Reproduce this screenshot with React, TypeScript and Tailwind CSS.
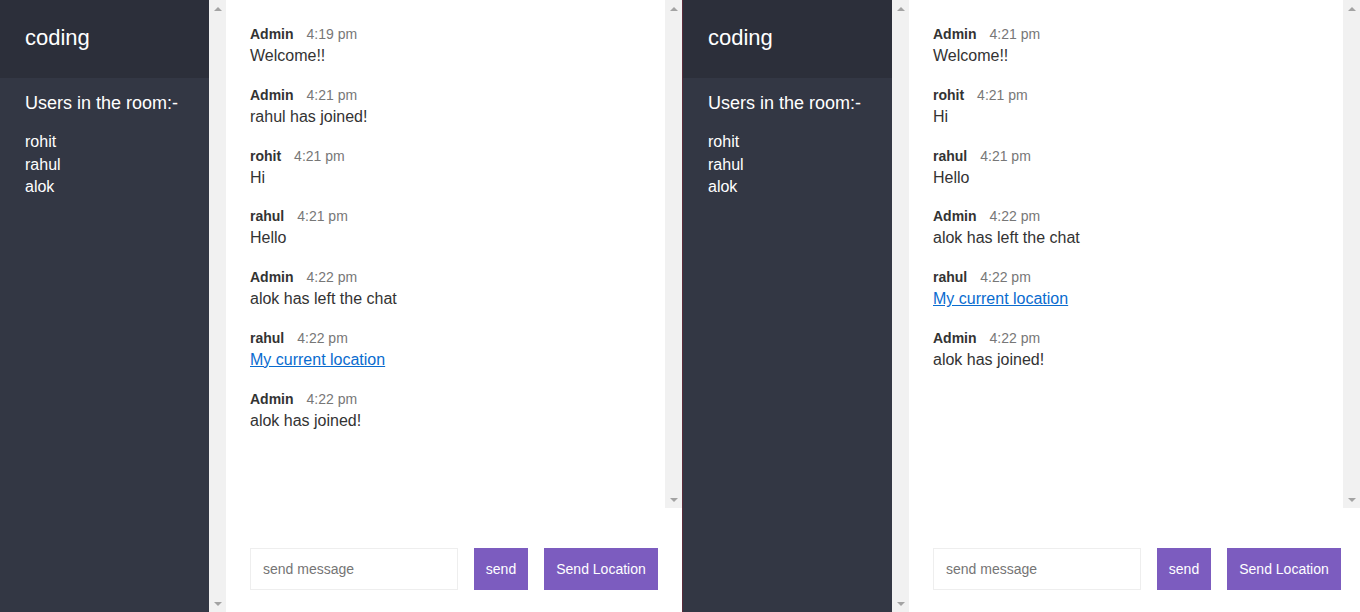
import React from "react";

type Message = {
  name: string;
  time: string;
  text: string;
  link?: boolean;
};

const leftMessages: Message[] = [
  { name: "Admin", time: "4:19 pm", text: "Welcome!!" },
  { name: "Admin", time: "4:21 pm", text: "rahul has joined!" },
  { name: "rohit", time: "4:21 pm", text: "Hi" },
  { name: "rahul", time: "4:21 pm", text: "Hello" },
  { name: "Admin", time: "4:22 pm", text: "alok has left the chat" },
  { name: "rahul", time: "4:22 pm", text: "My current location", link: true },
  { name: "Admin", time: "4:22 pm", text: "alok has joined!" },
];

const rightMessages: Message[] = [
  { name: "Admin", time: "4:21 pm", text: "Welcome!!" },
  { name: "rohit", time: "4:21 pm", text: "Hi" },
  { name: "rahul", time: "4:21 pm", text: "Hello" },
  { name: "Admin", time: "4:22 pm", text: "alok has left the chat" },
  { name: "rahul", time: "4:22 pm", text: "My current location", link: true },
  { name: "Admin", time: "4:22 pm", text: "alok has joined!" },
];

const users = ["rohit", "rahul", "alok"];

const Arrow: React.FC<{ down?: boolean }> = ({ down }) => (
  <div className="flex h-[17px] w-[17px] items-center justify-center">
    <svg width="8" height="4" viewBox="0 0 8 4">
      <polygon
        points={down ? "0,0 8,0 4,4" : "4,0 8,4 0,4"}
        fill="#a3a3a3"
      />
    </svg>
  </div>
);

const ScrollBar: React.FC<{ className?: string }> = ({ className = "" }) => (
  <div
    className={`flex w-[17px] shrink-0 flex-col justify-between bg-[#f1f1f1] ${className}`}
  >
    <Arrow />
    <Arrow down />
  </div>
);

const Sidebar: React.FC = () => (
  <div className="flex h-full shrink-0">
    <div className="w-[209px] bg-[#333744] text-white">
      <h2 className="bg-[#2c2f3a] px-[25px] pt-[23px] pb-[26px] text-[22px] leading-[29px] font-normal">
        coding
      </h2>
      <h3 className="mb-1 px-[25px] pt-[15px] text-[18px] leading-[21px] font-normal">
        Users in the room:-
      </h3>
      <ul className="px-[25px] pt-[13px] text-base leading-[22.5px]">
        {users.map((u) => (
          <li key={u}>{u}</li>
        ))}
      </ul>
    </div>
    <ScrollBar className="h-full" />
  </div>
);

const MessageItem: React.FC<{ m: Message }> = ({ m }) => (
  <div className="mb-[16.8px]">
    <p className="text-sm leading-[18px]">
      <span className="mr-[13px] font-bold text-[#333333]">{m.name}</span>
      <span className="text-[#777777]">{m.time}</span>
    </p>
    <p className="text-base leading-[26px] text-[#333333]">
      {m.link ? (
        <a href="#" className="text-[#0a6ccf] underline">
          {m.text}
        </a>
      ) : (
        m.text
      )}
    </p>
  </div>
);

const ChatWindow: React.FC<{ messages: Message[]; width: string }> = ({
  messages,
  width,
}) => (
  <div className={`flex h-full shrink-0 ${width}`}>
    <Sidebar />
    <div className="flex min-w-0 flex-1 flex-col bg-white">
      <div className="flex h-[508px] shrink-0">
        <div className="flex-1 overflow-hidden px-6 pt-[25px]">
          {messages.map((m, i) => (
            <MessageItem key={i} m={m} />
          ))}
        </div>
        <ScrollBar className="h-[508px]" />
      </div>
      <div className="flex flex-1 items-start pt-10 pl-6">
        <input
          placeholder="send message"
          className="h-[42px] w-[208px] shrink-0 border border-[#eeeeee] px-3 text-sm text-[#333333] outline-none placeholder:text-[#757575]"
        />
        <button className="ml-4 h-[42px] w-[54px] shrink-0 bg-[#7c5cbf] text-sm text-white">
          send
        </button>
        <button className="ml-4 h-[42px] w-[114px] shrink-0 bg-[#7c5cbf] text-sm text-white">
          Send Location
        </button>
      </div>
    </div>
  </div>
);

export default function App() {
  return (
    <div
      className="flex h-[612px] w-[1360px] overflow-hidden bg-white"
      style={{ fontFamily: '"Liberation Sans", Arial, sans-serif' }}
    >
      <ChatWindow messages={leftMessages} width="w-[682px]" />
      <div className="h-full w-px shrink-0 bg-[#5b2b3a]" />
      <ChatWindow messages={rightMessages} width="w-[677px]" />
    </div>
  );
}
